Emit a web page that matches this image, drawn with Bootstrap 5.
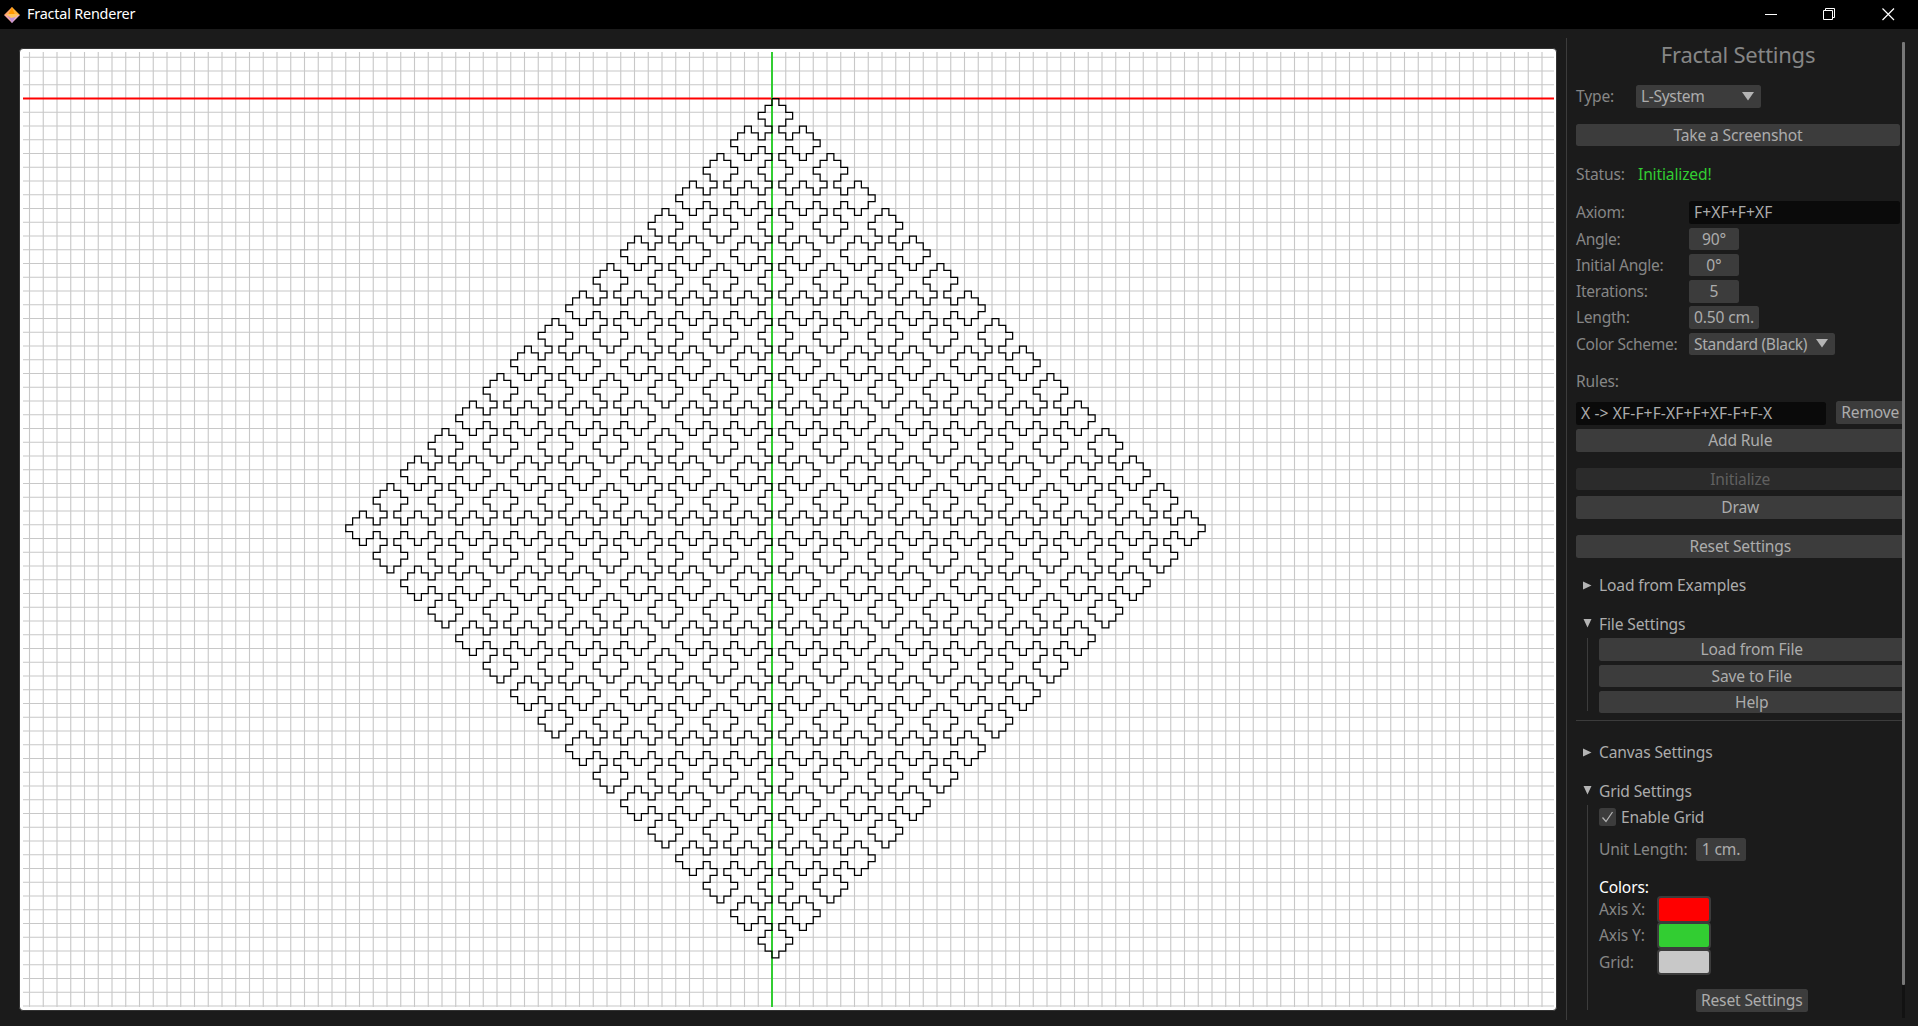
<!DOCTYPE html>
<html lang="en">
<head>
<meta charset="utf-8">
<title>Fractal Renderer</title>
<link href="https://cdn.jsdelivr.net/npm/bootstrap@5.3.0/dist/css/bootstrap.min.css" rel="stylesheet">
<style>
html,body{height:100%;overflow:hidden}
body{background:#1b1b1b;color:#868686;font-family:"Noto Sans","Open Sans",sans-serif;font-size:15.6px;font-weight:400;line-height:22.5px;letter-spacing:-.15px}
.titlebar{height:29px;background:#000;color:#fff;font-size:14.4px;letter-spacing:-.2px;padding-left:4px}
.titlebar .win-icons{gap:46px;margin-right:23px}
.app-name{margin-left:6px}
.stage{padding:19px 9px 15px 19px}
.paper{width:1538px;height:963px;background:#fff;border:1px solid #343434;border-radius:4px;padding:3px 2px 3px 3px}
.panel{width:352px;margin-top:9px;height:982px;border-left:1px solid #3c3c3c;padding-left:9px}
.tools{width:328.5px;padding-top:5px}
.heading{font-size:22px;height:32px;line-height:22px;width:324px;letter-spacing:-.25px}
.line{height:22.5px;display:flex;align-items:center;margin-top:3.75px;white-space:nowrap;flex-shrink:0}
.gap-l{margin-top:16.25px}
.lab{width:113px;letter-spacing:-.3px}
.ctl{height:22.5px;line-height:22.5px;background:#3c3c3c;color:#acacac;border:0;border-radius:2.5px;padding:0 5px;text-align:center;font-size:inherit;letter-spacing:inherit;white-space:nowrap}
.edge{border-radius:2.5px 0 0 2.5px}
.ctl.off{background:#2b2b2b;color:#606060}
.field{background:#0a0a0a;text-align:left;height:23px;letter-spacing:.12px}
.num{width:50px}
.combo{display:flex;justify-content:space-between;align-items:center;padding-right:7px;letter-spacing:-.35px}
.fold{color:#acacac;gap:7px;padding-left:7px}
.fold svg{width:9px;height:9px}
.branch{margin-left:11px;border-left:1px solid #3c3c3c;padding-left:11px}
.files{margin-top:3.3px;height:73px}
.files .line:first-child{margin-top:0}
.rule{height:1px;background:#3c3c3c;margin-top:8.5px}
.tick{width:17px;height:17.5px;background:#3c3c3c;border-radius:2.5px;margin-right:5px}
.axis{width:57.5px}
.swatch{width:54.5px;height:26.5px;border:2px solid #3c3c3c;border-radius:4px;flex-shrink:0}
.scroller{width:2.5px;height:976px;margin-top:3.5px;background:#121212;margin-left:-2.5px;z-index:2;position:relative}
.thumb{width:2.5px;height:943.5px;background:#787878;border-radius:1px}
</style>
<script src="https://cdn.jsdelivr.net/npm/bootstrap@5.3.0/dist/js/bootstrap.bundle.min.js"></script>
</head>
<body>
<header class="titlebar d-flex align-items-center">
  <svg width="17" height="18" viewBox="0 0 17 18"><path d="M8 1 0 9 8 10z" fill="#ffa56a"/><path d="M8 1 16 9 8 10z" fill="#ffb03a"/><path d="M8 1 4 9 11 9z" fill="#ff9800"/><path d="M0 9 8 17 8 9z" fill="#f7a6a0"/><path d="M16 9 8 17 8 9z" fill="#eab0c0"/><path d="M4 10 12 10 8 17z" fill="#bd8fd8"/><path d="M2 8 14 8 12 11 7 12z" fill="#ffc45c"/></svg>
  <span class="app-name me-auto">Fractal Renderer</span>
  <span class="win-icons d-flex align-items-center">
    <svg width="12" height="13"><path d="M0 6.5H12" stroke="#fff"/></svg>
    <svg width="13" height="13" fill="none" stroke="#fff"><path d="M.5 2.5H9.5V11.5H.5zM2.5 2.5V.5H11.5V9.5H9.5"/></svg>
    <svg width="13" height="13" stroke="#fff" stroke-width="1.2"><path d="M.5 .5 12 12M12 .5 .5 12"/></svg>
  </span>
</header>
<main class="d-flex">
  <section class="stage">
    <div class="paper"><svg id="plot" class="d-block" width="1531" height="955" viewBox="23 52 1531 955"></svg></div>
  </section>
  <aside class="panel d-flex">
    <div class="tools d-flex flex-column">
      <div class="heading text-center">Fractal Settings</div>
      <div class="line" style="margin-top:10px"><span style="width:60px">Type:</span><span class="ctl combo" style="width:125px">L-System<svg width="12" height="9"><path d="M0 0H12L6 8.5z" fill="#b4b4b4"/></svg></span></div>
      <div class="line gap-l"><button class="ctl" style="width:324px">Take a Screenshot</button></div>
      <div class="line gap-l"><span style="width:62px">Status:</span><span style="color:#32cd32">Initialized!</span></div>
      <div class="line gap-l"><span class="lab">Axiom:</span><span class="ctl field" style="width:211px">F+XF+F+XF</span></div>
      <div class="line"><span class="lab">Angle:</span><span class="ctl num">90°</span></div>
      <div class="line"><span class="lab">Initial Angle:</span><span class="ctl num">0°</span></div>
      <div class="line"><span class="lab">Iterations:</span><span class="ctl num">5</span></div>
      <div class="line"><span class="lab">Length:</span><span class="ctl" style="width:70px">0.50 cm.</span></div>
      <div class="line"><span class="lab">Color Scheme:</span><span class="ctl combo" style="width:146px">Standard (Black)<svg width="12" height="9"><path d="M0 0H12L6 8.5z" fill="#b4b4b4"/></svg></span></div>
      <div class="line" style="margin-top:15px">Rules:</div>
      <div class="line justify-content-between" style="margin-top:8.5px"><span class="ctl field" style="width:250px;margin-top:3px">X -&gt; XF-F+F-XF+F+XF-F+F-X</span><button class="ctl edge" style="width:68.5px">Remove</button></div>
      <div class="line" style="margin-top:5.7px"><button class="ctl edge w-100">Add Rule</button></div>
      <div class="line gap-l"><button class="ctl edge off w-100">Initialize</button></div>
      <div class="line" style="margin-top:6px"><button class="ctl edge w-100">Draw</button></div>
      <div class="line gap-l"><button class="ctl edge w-100">Reset Settings</button></div>
      <div class="line fold gap-l"><svg><path d="M0 .5 8.5 4.5 0 8.5z" fill="#b4b4b4"/></svg>Load from Examples</div>
      <div class="line fold gap-l"><svg><path d="M.5 0H8.5L4.5 8.5z" fill="#b4b4b4"/></svg>File Settings</div>
      <div class="branch files">
        <div class="line"><button class="ctl edge w-100">Load from File</button></div>
        <div class="line"><button class="ctl edge w-100">Save to File</button></div>
        <div class="line"><button class="ctl edge w-100">Help</button></div>
      </div>
      <div class="rule"></div>
      <div class="line fold" style="margin-top:20px"><svg><path d="M0 .5 8.5 4.5 0 8.5z" fill="#b4b4b4"/></svg>Canvas Settings</div>
      <div class="line fold gap-l"><svg><path d="M.5 0H8.5L4.5 8.5z" fill="#b4b4b4"/></svg>Grid Settings</div>
      <div class="branch" style="margin-top:2.5px;height:205px">
        <div class="line" style="margin-top:1px;color:#acacac"><span class="tick d-flex"><svg width="17" height="17.5" fill="none" stroke="#b4b4b4" stroke-width="1.25"><path d="M3.5 9.5 7 13.5 13.5 4"/></svg></span>Enable Grid</div>
        <div class="line" style="margin-top:10px"><span style="width:97px">Unit Length:</span><span class="ctl num">1 cm.</span></div>
        <div class="line text-white" style="margin-top:15px">Colors:</div>
        <div class="line" style="margin-top:0"><span class="axis">Axis X:</span><span class="swatch" style="background:#f00"></span></div>
        <div class="line"><span class="axis">Axis Y:</span><span class="swatch" style="background:#32cd32"></span></div>
        <div class="line"><span class="axis">Grid:</span><span class="swatch" style="background:#c8c8c8"></span></div>
        <div class="line gap-l justify-content-center"><button class="ctl" style="width:112px">Reset Settings</button></div>
      </div>
    </div>
    <div class="scroller"><div class="thumb"></div></div>
  </aside>
</main>
<script>
const ox = 772, oy = 98.5, unit = 13.75, step = unit / 2;
// grid
let grid = '';
for (let k = -60; k <= 75; k++) {
  const x = ox + k * unit, y = oy + k * unit;
  if (x > 23 && x < 1554) grid += `M${x} 52V1007`;
  if (y > 52 && y < 1007) grid += `M23 ${y}H1554`;
}
// L-system expansion and turtle walk
let word = 'F+XF+F+XF';
for (let i = 0; i < 5; i++) word = word.replace(/X/g, 'XF-F+F-XF+F+XF-F+F-X');
const dirs = [[1, 0], [0, 1], [-1, 0], [0, -1]];
let d = 0, cx = ox, cy = oy, curve = `M${cx} ${cy}`;
for (const c of word) {
  if (c === '+') d = (d + 1) % 4;
  else if (c === '-') d = (d + 3) % 4;
  else if (c === 'F') { cx += dirs[d][0] * step; cy += dirs[d][1] * step; curve += `L${cx} ${cy}`; }
}
document.getElementById('plot').innerHTML =
  `<path d="${grid}" stroke="#c8c8c8" stroke-width="1.12"/>` +
  `<path d="M23 ${oy}H1554" stroke="#f00" stroke-width="2"/>` +
  `<path d="M${ox} 52V1007" stroke="#32cd32" stroke-width="2"/>` +
  `<path d="${curve}" fill="none" stroke="#000" stroke-width="1.25"/>`;
</script>
</body>
</html>
